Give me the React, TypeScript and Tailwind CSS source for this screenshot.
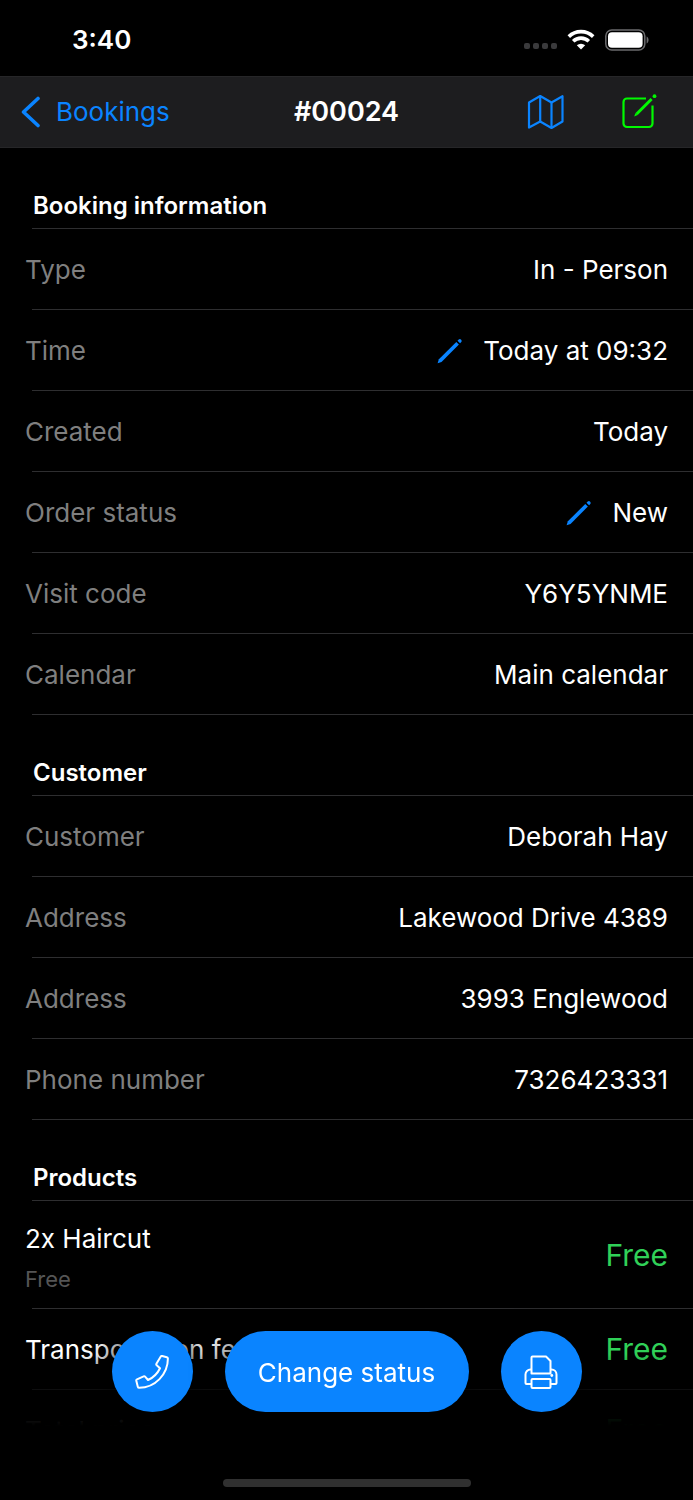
import type { ReactNode } from 'react';

interface Field {
    label: string;
    value: string;
    editable?: boolean;
}

interface Product {
    name: string;
    note?: string;
    price: string;
}

const bookingFields: Field[] = [
    { label: 'Type', value: 'In - Person' },
    { label: 'Time', value: 'Today at 09:32', editable: true },
    { label: 'Created', value: 'Today' },
    { label: 'Order status', value: 'New', editable: true },
    { label: 'Visit code', value: 'Y6Y5YNME' },
    { label: 'Calendar', value: 'Main calendar' }
];

const customerFields: Field[] = [
    { label: 'Customer', value: 'Deborah Hay' },
    { label: 'Address', value: 'Lakewood Drive 4389' },
    { label: 'Address', value: '3993 Englewood' },
    { label: 'Phone number', value: '7326423331' }
];

const products: Product[] = [
    { name: '2x Haircut', note: 'Free', price: 'Free' },
    { name: 'Transportation fee', price: 'Free' },
    { name: 'Total price', price: 'Free' }
];

function WifiIcon() {
    return (
        <svg width="28" height="22" viewBox="0 0 28 22" fill="none" stroke="#fff" strokeWidth="3.6">
            <path d="M1.8 7.6a17.4 17.4 0 0 1 24.4 0" />
            <path d="M6.2 12.3a11.2 11.2 0 0 1 15.6 0" />
            <path d="M14 20.6l-4.2-4.3a6.2 6.2 0 0 1 8.4 0z" fill="#fff" stroke="none" />
        </svg>
    );
}

function BatteryIcon() {
    return (
        <svg width="44" height="22" viewBox="0 0 44 22" fill="none">
            <rect x="0.8" y="1" width="39" height="20" rx="6" stroke="#6b6b6d" strokeWidth="1.5" />
            <rect x="3" y="3.3" width="34.6" height="15.4" rx="4" fill="#fff" />
            <path d="M41.6 7.5c2.6 1.2 2.6 5.8 0 7z" fill="#6b6b6d" />
        </svg>
    );
}

function MapIcon() {
    return (
        <svg width="38" height="36" viewBox="0 0 38 36" fill="none" stroke="#0a84ff" strokeWidth="2.2" strokeLinejoin="round">
            <path d="M2 8.5L13.2 2L24.5 8.5L35.5 2.2V27.5L24.5 34L13.2 27.5L2 33.5z" />
            <path d="M13.2 2V27.5M24.5 8.5V34" />
        </svg>
    );
}

function ComposeIcon() {
    return (
        <svg width="36" height="36" viewBox="0 0 36 36" fill="none" stroke="#00f900">
            <path d="M25 4.5H6a3.5 3.5 0 0 0-3.5 3.5V29.500a3.500 3.500 0 0 0 3.500 3.500H28a3.500 3.500 0 0 0 3.500-3.500V11.500" strokeWidth="2.2" />
            <path d="M15.6 20L30.6 5" strokeWidth="3" />
            <path d="M14.500 19L13.200 22.500L16.700 21.100z" fill="#00f900" stroke="none" />
            <circle cx="33.500" cy="2.200" r="1.900" fill="#00f900" stroke="none" />
        </svg>
    );
}

function PencilIcon() {
    return (
        <svg width="26" height="26" viewBox="0 0 26 26" fill="#0a84ff">
            <path d="M0.6 25.200L1.900 21.300L19.300 3.900L21.900 6.500L4.500 23.900z" />
            <path d="M20.500 2.700L21.700 1.500a1.850 1.850 0 0 1 2.600 2.600L23.100 5.300z" />
        </svg>
    );
}

function PhoneIcon() {
    return (
        <svg width="34" height="34" viewBox="0 0 34 34" fill="none" stroke="#fff" strokeWidth="2" strokeLinejoin="round">
            <path d="M25.800 1.500Q26.300 0.800 27.200 1L31.800 2.200Q32.900 2.500 32.900 3.600C32.900 19.500 20 32.800 4.200 32.800Q3.100 32.800 2.800 31.700L1.300 25.700Q1.100 24.700 2 24.300L8.600 21.400Q9.500 21 10.100 21.700L13 25C18.500 22.500 22.500 18.500 25 13.200L21.700 10.300Q21 9.700 21.400 8.800z" />
        </svg>
    );
}

function PrinterIcon() {
    return (
        <svg width="34" height="34" viewBox="0 0 34 34" fill="none" stroke="#fff" strokeWidth="2" strokeLinejoin="round">
            <path d="M7.500 18.500V2.500a1 1 0 0 1 1-1H22L26.500 6V18.500z" />
            <path d="M7.500 29H2.500a1 1 0 0 1-1-1V19.500a5 5 0 0 1 5-5H7.500M26.500 14.500H27.500a5 5 0 0 1 5 5V28a1 1 0 0 1-1 1H26.500" />
            <rect x="7.500" y="24" width="19" height="9" rx="1" />
            <circle cx="27.800" cy="20.500" r="1.400" fill="#fff" stroke="none" />
        </svg>
    );
}

function Section({ title, children }: { title: string; children: ReactNode }) {
    return (
        <section>
            <h2 className="flex h-20 items-end pb-2 pl-[33px] text-2xl leading-7 font-semibold">{title}</h2>
            <Separator />
            {children}
        </section>
    );
}

function Separator() {
    return <div className="ml-8 h-px bg-[#2e2e30]" />;
}

function FieldList({ fields }: { fields: Field[] }) {
    return (
        <dl>
            {fields.map((field, i) => (
                <div key={i}>
                    <div className="flex h-20 items-center justify-between px-[25px] pt-0.5">
                        <dt className="text-[#7f7f7f]">{field.label}</dt>
                        <dd className="flex items-center gap-5">
                            {field.editable && (
                                <button type="button" aria-label={`Edit ${field.label}`}>
                                    <PencilIcon />
                                </button>
                            )}
                            {field.value}
                        </dd>
                    </div>
                    <Separator />
                </div>
            ))}
        </dl>
    );
}

export default function App() {
    return (
        <div className="min-h-screen bg-black pb-7 font-[Inter,sans-serif] text-[26px] leading-8 text-white">
            <div className="flex h-[76px] items-center justify-between pt-1 pr-11 pl-[72px]">
                <span className="font-semibold">3:40</span>
                <div className="flex items-center gap-2.5">
                    <div className="flex gap-[3px] pt-3">
                        <span className="size-1.5 rounded-xs bg-[#3a3a3c]" />
                        <span className="size-1.5 rounded-xs bg-[#3a3a3c]" />
                        <span className="size-1.5 rounded-xs bg-[#3a3a3c]" />
                        <span className="size-1.5 rounded-xs bg-[#3a3a3c]" />
                    </div>
                    <WifiIcon />
                    <BatteryIcon />
                </div>
            </div>

            <header className="grid h-[72px] grid-cols-[1fr_auto_1fr] items-center border-y border-[#262628] bg-[#1d1d1f] px-5">
                <a href="#bookings" className="flex items-center gap-4 text-[#0a84ff]">
                    <svg width="20" height="32" viewBox="0 0 20 32" fill="none" stroke="#0a84ff" strokeWidth="3.6" strokeLinecap="round" strokeLinejoin="round">
                        <path d="M18 2.500L3.500 16L18 29.500" />
                    </svg>
                    Bookings
                </a>
                <h1 className="text-[27px] font-semibold">#00024</h1>
                <div className="flex items-center justify-end gap-14 pr-4">
                    <button type="button" aria-label="Map">
                        <MapIcon />
                    </button>
                    <button type="button" aria-label="Edit booking">
                        <ComposeIcon />
                    </button>
                </div>
            </header>

            <main>
                <Section title="Booking information">
                    <FieldList fields={bookingFields} />
                </Section>
                <Section title="Customer">
                    <FieldList fields={customerFields} />
                </Section>
                <Section title="Products">
                    <ul>
                        {products.map((product) => (
                            <li key={product.name}>
                                <div className="flex min-h-20 items-center justify-between px-[25px]">
                                    <div className={product.note ? 'flex flex-col gap-2 pt-[22px] pb-[13px]' : 'pt-0.5'}>
                                        <p>{product.name}</p>
                                        {product.note && <p className="text-[22px] text-[#555]">{product.note}</p>}
                                    </div>
                                    <span className="text-3xl text-[#30d158]">{product.price}</span>
                                </div>
                                <Separator />
                            </li>
                        ))}
                    </ul>
                </Section>
            </main>

            <div className="fixed inset-x-0 bottom-0">
                <div className="h-[72px] bg-linear-to-b from-transparent via-black/70 to-black" />
                <div className="h-[74px] bg-black" />
                <div className="absolute inset-x-0 bottom-[88px] flex justify-center gap-8">
                    <button
                        type="button"
                        aria-label="Call customer"
                        className="flex size-[81px] items-center justify-center rounded-full bg-[#0a84ff] shadow-[0_0_32px_#000]"
                    >
                        <PhoneIcon />
                    </button>
                    <button type="button" className="h-[81px] w-[244px] rounded-full bg-[#0a84ff] pt-0.5 shadow-[0_0_32px_#000]">
                        Change status
                    </button>
                    <button
                        type="button"
                        aria-label="Print"
                        className="flex size-[81px] items-center justify-center rounded-full bg-[#0a84ff] shadow-[0_0_32px_#000]"
                    >
                        <PrinterIcon />
                    </button>
                </div>
                <div className="absolute inset-x-0 bottom-[13px] flex justify-center">
                    <div className="h-2 w-[248px] rounded-full bg-[#303030]" />
                </div>
            </div>
        </div>
    );
}
